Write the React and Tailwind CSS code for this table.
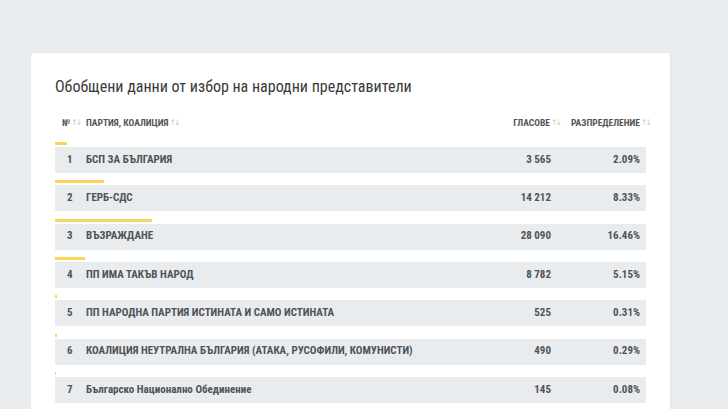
import React from "react";

const rows = [
  { n: 1, name: "БСП ЗА БЪЛГАРИЯ", votes: "3 565", pct: 2.09 },
  { n: 2, name: "ГЕРБ-СДС", votes: "14 212", pct: 8.33 },
  { n: 3, name: "ВЪЗРАЖДАНЕ", votes: "28 090", pct: 16.46 },
  { n: 4, name: "ПП ИМА ТАКЪВ НАРОД", votes: "8 782", pct: 5.15 },
  { n: 5, name: "ПП НАРОДНА ПАРТИЯ ИСТИНАТА И САМО ИСТИНАТА", votes: "525", pct: 0.31 },
  { n: 6, name: "КОАЛИЦИЯ НЕУТРАЛНА БЪЛГАРИЯ (АТАКА, РУСОФИЛИ, КОМУНИСТИ)", votes: "490", pct: 0.29 },
  { n: 7, name: "Българско Национално Обединение", votes: "145", pct: 0.08 },
];

const font = { fontFamily: '"Roboto Condensed", "Liberation Sans Narrow", "DejaVu Sans Condensed", "Noto Sans", sans-serif' };

function Sort() {
  return (
    <span className="ml-[1px] inline-flex items-center text-[8px] leading-none text-[#cfc7a3] font-normal tracking-[-1.5px]">
      ↑↓
    </span>
  );
}

export default function App() {
  return (
    <div className="min-h-[409px] w-[728px] bg-[#e9ecef] pt-[53px] pl-[31px] overflow-hidden" style={font}>
      <div className="w-[639px] h-[400px] bg-white rounded-[3px] shadow-[0_0_2px_rgba(0,0,0,0.05)] px-[24px] pt-[24px]">
        <div className="text-[16px] leading-[20px] text-[#3a3a3a]">
          Обобщени данни от избор на народни представители
        </div>
        <div className="mt-[20px] w-[595px] flex items-center h-[12px] text-[9.5px] font-bold text-[#555] uppercase">
          <div className="w-[31px] pl-[7px] flex items-center">№<Sort /></div>
          <div className="flex-1 flex items-center">ПАРТИЯ, КОАЛИЦИЯ<Sort /></div>
          <div className="w-[80px] flex items-center justify-end">ГЛАСОВЕ<Sort /></div>
          <div className="w-[90px] flex items-center justify-end">РАЗПРЕДЕЛЕНИЕ<Sort /></div>
        </div>
        <div className="mt-[13px] w-[591px]">
          {rows.map((r) => (
            <div key={r.n} className="mb-[7.33px]">
              <div className="h-[3px] bg-[#f8d55a]" style={{ width: `${r.pct}%`, minWidth: "1px" }} />
              <div className="mt-[2px] h-[26px] bg-[#e9ecef] flex items-center text-[11px] font-bold text-[#4f5357]">
                <div className="w-[31px] pl-[12px]">{r.n}</div>
                <div className="flex-1">{r.name}</div>
                <div className="w-[80px] text-right">{r.votes}</div>
                <div className="w-[95px] text-right pr-[6px]">{r.pct.toFixed(2)}%</div>
              </div>
            </div>
          ))}
        </div>
      </div>
    </div>
  );
}
